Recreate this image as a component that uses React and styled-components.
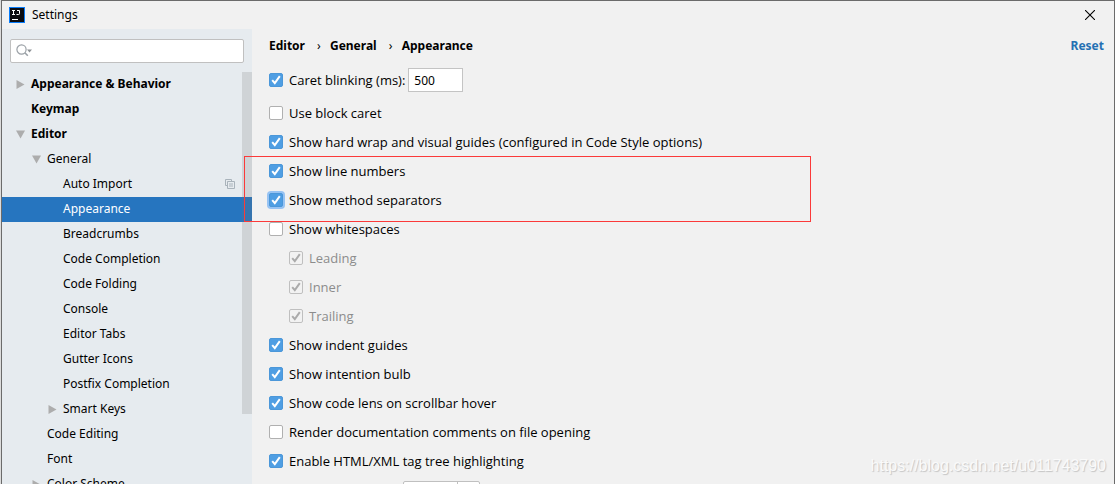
import React, { useState } from "react";
import styled, { createGlobalStyle } from "styled-components";

const GlobalStyle = createGlobalStyle`
  * {
    box-sizing: border-box;
  }
  body {
    margin: 0;
    background: #dcdcdc;
    font-family: "Noto Sans", "Open Sans", sans-serif;
    font-size: 12px;
    line-height: 16px;
    color: #000;
  }
`;

const treeItems = [
  { label: "Appearance & Behavior", level: 0, arrow: "right", bold: true },
  { label: "Keymap", level: 0, bold: true },
  { label: "Editor", level: 0, arrow: "down", bold: true },
  { label: "General", level: 1, arrow: "down" },
  { label: "Auto Import", level: 2, copy: true },
  { label: "Appearance", level: 2 },
  { label: "Breadcrumbs", level: 2 },
  { label: "Code Completion", level: 2 },
  { label: "Code Folding", level: 2 },
  { label: "Console", level: 2 },
  { label: "Editor Tabs", level: 2 },
  { label: "Gutter Icons", level: 2 },
  { label: "Postfix Completion", level: 2 },
  { label: "Smart Keys", level: 2, arrow: "right" },
  { label: "Code Editing", level: 1 },
  { label: "Font", level: 1 },
  { label: "Color Scheme", level: 1, arrow: "right" },
];

const initialOptions = [
  { id: "block", label: "Use block caret", checked: false },
  { id: "wrap", label: "Show hard wrap and visual guides (configured in Code Style options)", checked: true },
  { id: "lines", label: "Show line numbers", checked: true },
  { id: "methods", label: "Show method separators", checked: true, focused: true },
  { id: "spaces", label: "Show whitespaces", checked: false },
  { id: "leading", label: "Leading", checked: true, sub: true },
  { id: "inner", label: "Inner", checked: true, sub: true },
  { id: "trailing", label: "Trailing", checked: true, sub: true },
  { id: "indent", label: "Show indent guides", checked: true },
  { id: "bulb", label: "Show intention bulb", checked: true },
  { id: "lens", label: "Show code lens on scrollbar hover", checked: true },
  { id: "docs", label: "Render documentation comments on file opening", checked: false },
  { id: "tags", label: "Enable HTML/XML tag tree highlighting", checked: true },
];

const Logo = () => (
  <svg width="16" height="16" viewBox="0 0 16 16" aria-hidden="true">
    <rect width="16" height="16" fill="#087cfa" />
    <rect x="1" y="1" width="14" height="14" fill="#0b0b0f" />
    <path d="M3 3.500h3M4.500 3v5M3 7.500h3M8 3.500h2.500v3.200q0 .8-.8.8H7.500" fill="none" stroke="#fff" />
    <path d="M3 12.500h6" stroke="#fff" />
  </svg>
);

const SearchIcon = () => (
  <svg width="18" height="14" viewBox="0 0 18 14" aria-hidden="true">
    <circle cx="5.5" cy="5.5" r="4.600" fill="none" stroke="#9aa0a6" strokeWidth="1.2" />
    <path d="M8.800 8.800l3 3" stroke="#9aa0a6" strokeWidth="1.6" />
    <path d="M11 5.500h5l-2.500 3z" fill="#8d9296" />
  </svg>
);

const Arrow = ({ dir }) => (
  <svg width="9" height="9" viewBox="0 0 9 9" aria-hidden="true">
    <path d={dir === "down" ? "M0 .5h9l-4.500 8z" : "M.5 0v9l8-4.500z"} fill="#adadad" />
  </svg>
);

const CopyIcon = () => (
  <svg width="10" height="10" viewBox="0 0 10 10" fill="none" stroke="#a9b3bb" aria-hidden="true">
    <path d="M2.500 6.500h-2v-6h6v2" />
    <path d="M2.500 2.500h7v7h-7zM4 5h4M4 7h4" />
  </svg>
);

const App = () => {
  const [selected, setSelected] = useState("Appearance");
  const [blinking, setBlinking] = useState(true);
  const [delay, setDelay] = useState("500");
  const [options, setOptions] = useState(initialOptions);

  const toggle = (id) => {
    setOptions(options.map((o) => (o.id === id ? { ...o, checked: !o.checked } : o)));
  };

  return (
    <>
      <GlobalStyle />
      <Dialog>
        <TitleBar>
          <Logo />
          <Title>Settings</Title>
          <CloseButton type="button" aria-label="Close">
            <svg width="10" height="10" viewBox="0 0 10 10" aria-hidden="true">
              <path d="M0 0l10 10M10 0L0 10" stroke="#000" strokeWidth="1.1" />
            </svg>
          </CloseButton>
        </TitleBar>
        <Body>
          <Sidebar>
            <SearchBox>
              <SearchIcon />
              <SearchInput type="text" aria-label="Search settings" />
            </SearchBox>
            <Tree>
              {treeItems.map((item) => (
                <TreeRow
                  type="button"
                  key={item.label}
                  $level={item.level}
                  $bold={item.bold}
                  $selected={item.label === selected}
                  onClick={() => setSelected(item.label)}
                >
                  <ArrowSlot>{item.arrow && <Arrow dir={item.arrow} />}</ArrowSlot>
                  <TreeLabel>{item.label}</TreeLabel>
                  {item.copy && <CopyIcon />}
                </TreeRow>
              ))}
              <ScrollThumb />
            </Tree>
          </Sidebar>
          <Main>
            <Header>
              <Crumbs>
                <b>Editor</b>
                <Chevron />
                <b>General</b>
                <Chevron />
                <b>Appearance</b>
              </Crumbs>
              <ResetLink href="#reset">Reset</ResetLink>
            </Header>
            <CaretRow>
              <OptionLabel>
                <Checkbox type="checkbox" checked={blinking} onChange={() => setBlinking(!blinking)} />
                Caret blinking (ms):
              </OptionLabel>
              <DelayInput
                type="text"
                aria-label="Caret blinking (ms)"
                value={delay}
                onChange={(e) => setDelay(e.target.value)}
              />
            </CaretRow>
            {options.map((o) => (
              <OptionRow key={o.id} $sub={o.sub}>
                <OptionLabel $disabled={o.sub}>
                  <Checkbox
                    type="checkbox"
                    checked={o.checked}
                    disabled={o.sub}
                    $focused={o.focused}
                    onChange={() => toggle(o.id)}
                  />
                  {o.label}
                </OptionLabel>
              </OptionRow>
            ))}
            <LevelsRow>
              <Combo>
                <ComboInput type="text" aria-label="Levels to highlight" />
                <ComboButton type="button" aria-label="Show levels" />
              </Combo>
            </LevelsRow>
          </Main>
        </Body>
        <Highlight />
        <Watermark>https://blog.csdn.net/u011743790</Watermark>
      </Dialog>
    </>
  );
};

const Dialog = styled.div`
  position: relative;
  display: flex;
  flex-direction: column;
  height: 100vh;
  margin-left: 1px;
  overflow: hidden;
  background: #f1f1f1;
  border: 1px solid #6b6b6b;
  border-bottom: none;
`;

const TitleBar = styled.header`
  display: flex;
  align-items: center;
  flex-shrink: 0;
  height: 28px;
  padding: 0 19px 0 7px;
`;

const Title = styled.span`
  flex: 1;
  margin-left: 7px;
`;

const CloseButton = styled.button`
  display: flex;
  padding: 0;
  background: none;
  border: none;
`;

const Body = styled.div`
  display: flex;
  flex: 1;
  min-height: 0;
`;

const Sidebar = styled.nav`
  display: flex;
  flex-direction: column;
  flex-shrink: 0;
  width: 250px;
  background: #e6ebef;
`;

const SearchBox = styled.div`
  display: flex;
  align-items: center;
  flex-shrink: 0;
  height: 24px;
  margin: 10px 8px 9px;
  padding: 0 5px;
  background: #fff;
  border: 1px solid #c0c0c0;
  border-radius: 2px;
`;

const SearchInput = styled.input`
  flex: 1;
  min-width: 0;
  padding: 0;
  background: none;
  border: none;
  outline: none;
  font: inherit;
`;

const Tree = styled.div`
  position: relative;
  flex: 1;
  min-height: 0;
  overflow: hidden;
`;

const TreeRow = styled.button`
  display: flex;
  align-items: center;
  width: 100%;
  height: 25px;
  padding: 0 17px 1px ${(p) => 14 + p.$level * 16}px;
  background: ${(p) => (p.$selected ? "#2675bf" : "none")};
  border: none;
  color: ${(p) => (p.$selected ? "#fff" : "#000")};
  font: inherit;
  font-weight: ${(p) => (p.$bold ? 700 : 400)};
  text-align: left;
`;

const ArrowSlot = styled.span`
  display: flex;
  width: 15px;
`;

const TreeLabel = styled.span`
  flex: 1;
  white-space: nowrap;
`;

const ScrollThumb = styled.div`
  position: absolute;
  top: 0;
  right: 0;
  width: 10px;
  height: 342px;
  background: rgba(115, 115, 115, 0.2);
`;

const Main = styled.main`
  flex: 1;
  min-width: 0;
  padding: 9px 10px 0 17px;
`;

const Header = styled.div`
  display: flex;
  justify-content: space-between;
  margin-bottom: 14px;
`;

const Crumbs = styled.div`
  display: flex;
  align-items: center;
`;

const Chevron = styled.span`
  width: 25px;
  padding-left: 3px;
  text-align: center;

  &::before {
    content: "›";
  }
`;

const ResetLink = styled.a`
  color: #2470b3;
  font-weight: 700;
  text-decoration: none;
`;

const CaretRow = styled.div`
  display: flex;
  align-items: center;
  gap: 3px;
  height: 24px;
  margin-bottom: 7px;
`;

const OptionRow = styled.div`
  display: flex;
  align-items: center;
  height: 29px;
  padding: 0 0 1px ${(p) => (p.$sub ? 20 : 0)}px;
`;

const OptionLabel = styled.label`
  display: flex;
  align-items: center;
  gap: 6px;
  white-space: nowrap;
  color: ${(p) => (p.$disabled ? "#8c8c8c" : "#000")};
  font-family: "Open Sans", "Noto Sans", sans-serif;
  font-size: 13px;
`;

const check = (color) =>
  `url("data:image/svg+xml,%3Csvg xmlns='http://www.w3.org/2000/svg' viewBox='0 0 14 14'%3E%3Cpath d='M3.200 7.200l2.600 3 5-7' fill='none' stroke='%23${color}' stroke-width='2'/%3E%3C/svg%3E")`;

const Checkbox = styled.input`
  appearance: none;
  width: 14px;
  height: 14px;
  margin: 0;
  background: #fff center / 14px 14px no-repeat;
  background-origin: border-box;
  border: 1px solid #b0b0b0;
  border-radius: 2px;
  box-shadow: ${(p) => (p.$focused ? "0 0 0 2px #97c3f3" : "none")};

  &:checked {
    background-color: #4f9ee3;
    background-image: ${check("fff")};
    border-color: #4b97d9;
  }
  &:disabled {
    background-color: #f2f2f2;
    background-image: ${check("ababab")};
    border-color: #bfbfbf;
  }
`;

const DelayInput = styled.input`
  width: 55px;
  height: 24px;
  padding: 0 5px;
  background: #fff;
  border: 1px solid #c4c4c4;
  font: inherit;
`;

const LevelsRow = styled.div`
  display: flex;
  padding: 5px 0 0 134px;
`;

const Combo = styled.div`
  display: flex;
  width: 77px;
  height: 24px;
  background: #fff;
  border: 1px solid #c0c0c0;
  border-radius: 2px;
`;

const ComboInput = styled.input`
  flex: 1;
  min-width: 0;
  background: none;
  border: none;
`;

const ComboButton = styled.button`
  width: 22px;
  background: none;
  border: none;
  border-left: 1px solid #c0c0c0;
`;

const Highlight = styled.div`
  position: absolute;
  top: 155px;
  left: 242px;
  width: 567px;
  height: 66px;
  border: 1px solid #fb3a3a;
  pointer-events: none;
`;

const Watermark = styled.div`
  position: absolute;
  right: 8px;
  bottom: 10px;
  color: #fafafa;
  font-family: "Liberation Sans", Arial, sans-serif;
  font-size: 16px;
  text-shadow: 1px 1px 1px #c4c4c4;
`;

export default App;
